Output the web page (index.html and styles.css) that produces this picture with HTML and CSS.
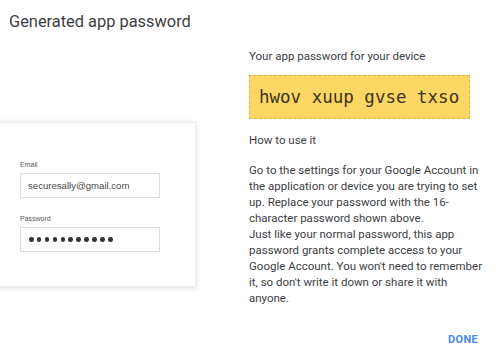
FILE: index.html
```html
<!DOCTYPE html>
<html lang="en">
<head>
<meta charset="utf-8">
<title>Generated app password</title>
<link rel="stylesheet" href="styles.css">
</head>
<body>
<div class="dialog">
  <h1 class="title">Generated app password</h1>
  <div class="main">
    <div class="left">
      <div class="card">
        <div class="label">Email</div>
        <div class="field">securesally@gmail.com</div>
        <div class="label label-pw">Password</div>
        <div class="field dots">
          <span></span><span></span><span></span><span></span><span></span><span></span><span></span><span></span><span></span><span></span><span></span>
        </div>
      </div>
    </div>
    <div class="right">
      <div class="heading">Your app password for your device</div>
      <div class="pwbox">hwov xuup gvse txso</div>
      <div class="heading how">How to use it</div>
      <p class="text">Go to the settings for your Google Account in<br>the application or device you are trying to set<br>up. Replace your password with the 16-<br>character password shown above.<br>Just like your normal password, this app<br>password grants complete access to your<br>Google Account. You won't need to remember<br>it, so don't write it down or share it with<br>anyone.</p>
      <div class="actions"><span class="done">DONE</span></div>
    </div>
  </div>
</div>
</body>
</html>
```

FILE: styles.css
```css
html, body {
  margin: 0;
  background: #fff;
}
body {
  font-family: Roboto, "Noto Sans", sans-serif;
  width: 503px;
  height: 359px;
  overflow: hidden;
}
.title {
  margin: 0;
  padding: 12px 0 8px 9px;
  font-size: 16.4px;
  line-height: 20px;
  font-weight: 400;
  color: #3c4043;
}
.main {
  display: flex;
}
.left {
  width: 249px;
  flex: none;
}
.card {
  margin: 82px 0 0 -20px;
  width: 216px;
  height: 165px;
  box-sizing: border-box;
  padding: 37px 0 0 39px;
  background: #fff;
  border: 1px solid #ededed;
  box-shadow: 0 1px 5px rgba(0, 0, 0, 0.16);
  font-family: "Liberation Sans", Arial, sans-serif;
}
.label {
  font-size: 7px;
  line-height: 10px;
  color: #555;
}
.label-pw {
  margin-top: 16px;
}
.field {
  margin-top: 3px;
  width: 140px;
  height: 25px;
  box-sizing: border-box;
  border: 1px solid #dedede;
  padding-left: 7px;
  font-size: 9.6px;
  line-height: 23px;
  color: #4a4a4a;
}
.dots {
  display: flex;
  align-items: center;
  gap: 3.3px;
  padding-left: 8px;
}
.dots span {
  width: 4.6px;
  height: 4.6px;
  border-radius: 50%;
  background: #333;
}
.right {
  flex: 1;
  padding-top: 8px;
}
.heading {
  font-size: 11.5px;
  line-height: 16px;
  color: #3c4043;
}
.pwbox {
  margin-top: 11px;
  width: 221px;
  height: 44px;
  box-sizing: border-box;
  background: #fdd663;
  border: 1px dashed #e0b54a;
  font-family: "DejaVu Sans Mono", "Liberation Mono", monospace;
  font-size: 17.5px;
  line-height: 42px;
  padding-left: 9px;
  color: #3a3420;
}
.how {
  margin-top: 13px;
}
.text {
  margin: 14px 0 0;
  font-size: 11.5px;
  line-height: 16px;
  color: #3c4043;
}
.actions {
  margin-top: 26px;
  width: 229px;
  display: flex;
  justify-content: flex-end;
}
.done {
  font-size: 11px;
  line-height: 16px;
  font-weight: 700;
  color: #4a89f3;
  letter-spacing: 0.3px;
}
```
